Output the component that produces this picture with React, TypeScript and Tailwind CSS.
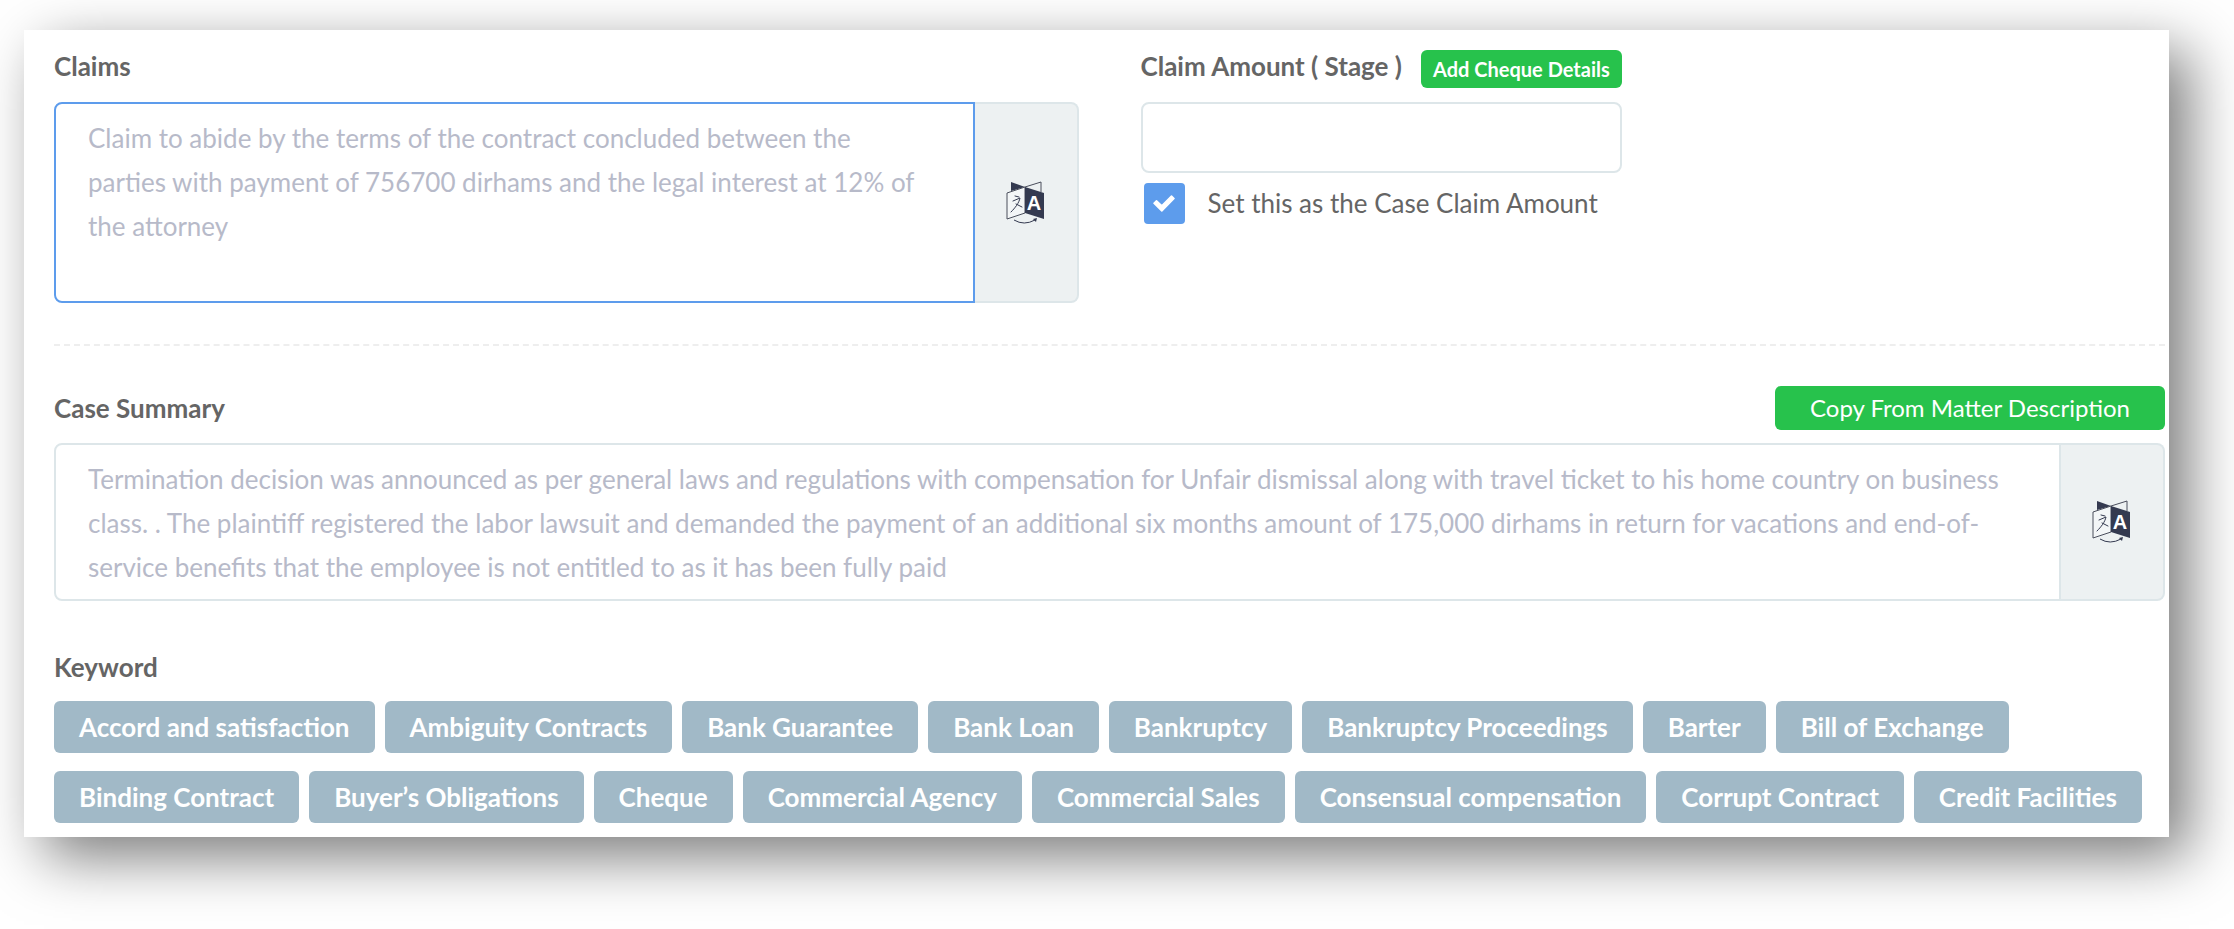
const keywords = [
  "Accord and satisfaction",
  "Ambiguity Contracts",
  "Bank Guarantee",
  "Bank Loan",
  "Bankruptcy",
  "Bankruptcy Proceedings",
  "Barter",
  "Bill of Exchange",
  "Binding Contract",
  "Buyer’s Obligations",
  "Cheque",
  "Commercial Agency",
  "Commercial Sales",
  "Consensual compensation",
  "Corrupt Contract",
  "Credit Facilities",
];

const claimsText =
  "Claim to abide by the terms of the contract concluded between the parties with payment of 756700 dirhams and the legal interest at 12% of the attorney";

const summaryText =
  "Termination decision was announced as per general laws and regulations with compensation for Unfair dismissal along with travel ticket to his home country on business class. . The plaintiff registered the labor lawsuit and demanded the payment of an additional six months amount of 175,000 dirhams in return for vacations and end-of-service benefits that the employee is not entitled to as it has been fully paid";

function TranslateIcon() {
  return (
    <svg width="40" height="44" viewBox="0 0 40 44" fill="none" aria-hidden="true">
      <path d="M5 1 L19 6 L5 10 Z" fill="#343a50" />
      <path d="M19 6 L35 1 V11" stroke="#4a4e5c" strokeWidth="1" />
      <path d="M1 12 L19 6 V32 L1 38 Z" fill="#f3f6f7" stroke="#4a4e5c" strokeWidth="1" />
      <path d="M19 6 L38 12 V38 L19 32 Z" fill="#343a50" />
      <path
        d="M9 15 L13 16 M7 20 L14 17 C13 22 9 27 5 31 M10 23 L16 26"
        stroke="#343a50"
        strokeWidth="1"
        strokeLinecap="round"
      />
      <text
        x="28"
        y="29"
        textAnchor="middle"
        fontSize="20"
        fontWeight="700"
        fill="#fff"
        className="font-['Liberation_Sans',sans-serif]"
      >
        A
      </text>
      <path d="M8 39 Q18 45 29 39" stroke="#343a50" strokeWidth="1" />
      <path d="M27 38 L31 37 L30 41 Z" fill="#343a50" />
    </svg>
  );
}

function CheckIcon() {
  return (
    <svg
      width="22"
      height="17"
      viewBox="0 0 22 17"
      aria-hidden="true"
      className="pointer-events-none absolute inset-0 m-auto"
    >
      <path
        d="M18.5 1 L21 3.5 L8.8 16 L1 8.3 L3.5 5.8 L8.8 10.8 Z"
        fill="#fff"
        stroke="#fff"
        strokeWidth="1.6"
        strokeLinejoin="round"
      />
    </svg>
  );
}

interface TranslateFieldProps {
  id: string;
  value: string;
  focused?: boolean;
}

function TranslateField({ id, value, focused }: TranslateFieldProps) {
  return (
    <div className="flex">
      <textarea
        id={id}
        defaultValue={value}
        className={`min-w-0 flex-1 resize-none overflow-hidden rounded-l-lg border-2 bg-white py-3 pl-8 text-[26px] leading-[44px] text-[#b7bac9] outline-none ${
          focused
            ? "h-[201px] border-[#5d9cec] pr-14"
            : "h-[158px] border-[#dde6e9] pr-8"
        }`}
      />
      <button
        type="button"
        aria-label="Translate"
        className="flex w-[104px] shrink-0 items-center justify-center rounded-r-lg border-2 border-l-0 border-[#dde6e9] bg-[#edf1f2]"
      >
        <TranslateIcon />
      </button>
    </div>
  );
}

export default function App() {
  return (
    <div className="bg-white pt-[30px] pr-[65px] pb-[92px] pl-6 font-['Lato',sans-serif] text-[#656565]">
      <main className="bg-white pt-5 pr-1 pb-[14px] pl-[30px] shadow-[20px_20px_56px_rgba(0,0,0,0.52)]">
        <section className="grid grid-cols-4 gap-x-[62px]">
          <div className="col-span-2">
            <label htmlFor="claims" className="mb-5 block text-[26px] leading-8 font-bold">
              Claims
            </label>
            <TranslateField id="claims" value={claimsText} focused />
          </div>
          <div>
            <div className="mb-[14px] flex h-[38px] items-start justify-between whitespace-nowrap">
              <label htmlFor="amount" className="text-[26px] leading-8 font-bold">
                Claim Amount ( Stage )
              </label>
              <button
                type="button"
                className="h-[38px] rounded-md bg-[#27c24c] px-3 text-xl font-bold text-white"
              >
                Add Cheque Details
              </button>
            </div>
            <input
              id="amount"
              type="text"
              className="block h-[71px] w-full rounded-lg border-2 border-[#dde6e9] px-8 text-[26px] outline-none"
            />
            <label className="mt-[10px] flex items-center gap-[23px] pl-[3px] text-[26px] whitespace-nowrap">
              <span className="relative size-[41px] shrink-0">
                <input
                  type="checkbox"
                  defaultChecked
                  className="block size-full appearance-none rounded-sm bg-[#5d9cec]"
                />
                <CheckIcon />
              </span>
              Set this as the Case Claim Amount
            </label>
          </div>
        </section>

        <hr className="mt-[41px] mb-10 border-t-2 border-dashed border-[#eee]" />

        <section>
          <div className="mb-[13px] flex items-center justify-between">
            <label htmlFor="summary" className="text-[26px] leading-9 font-bold">
              Case Summary
            </label>
            <button
              type="button"
              className="h-11 rounded-md bg-[#27c24c] px-[35px] text-2xl text-white"
            >
              Copy From Matter Description
            </button>
          </div>
          <TranslateField id="summary" value={summaryText} />
        </section>

        <section className="mt-12">
          <h2 className="mb-4 text-[26px] leading-9 font-bold">Keyword</h2>
          <ul className="flex flex-wrap gap-x-[10px] gap-y-[18px]">
            {keywords.map((keyword) => (
              <li
                key={keyword}
                className="rounded-md bg-[#a1b9c7] px-[25px] text-[26px] leading-[52px] font-bold text-white"
              >
                {keyword}
              </li>
            ))}
          </ul>
        </section>
      </main>
    </div>
  );
}
